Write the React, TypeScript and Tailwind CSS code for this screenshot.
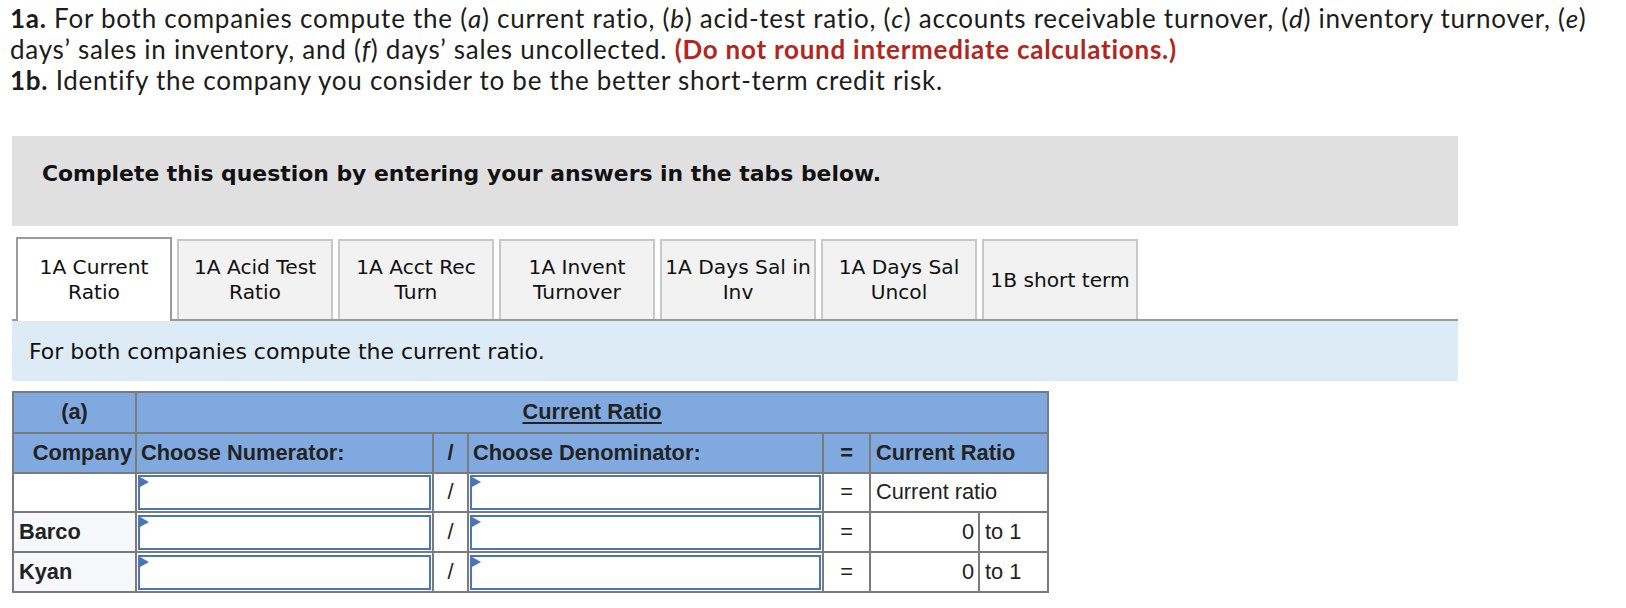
import React from "react";

const Inp = () => (
  <div className="relative h-[35px] border-2 border-[#4a76b8] bg-white">
    <div className="absolute left-0 top-0 w-0 h-0 border-t-[5px] border-b-[5px] border-l-[9px] border-t-transparent border-b-transparent border-l-[#4a76b8]" />
  </div>
);

const tabs = [
  ["1A Current", "Ratio"],
  ["1A Acid Test", "Ratio"],
  ["1A Acct Rec", "Turn"],
  ["1A Invent", "Turnover"],
  ["1A Days Sal in", "Inv"],
  ["1A Days Sal", "Uncol"],
  ["1B short term"],
];

export default function App() {
  const cell = "border-2 border-[#7b7b7b]";
  return (
    <div className="w-[1626px] h-[608px] bg-white overflow-hidden text-[#111]">
      <div
        className="pl-[10px] pt-[3px] text-[26px] leading-[31px] tracking-[0.75px] text-[#1c1c1c]"
        style={{ fontFamily: "Lato, 'Open Sans', sans-serif" }}
      >
        <b>1a.</b> For both companies compute the (<i>a</i>) current ratio, (<i>b</i>) acid-test ratio, (<i>c</i>) accounts receivable turnover, (<i>d</i>) inventory turnover, (<i>e</i>)
        <br />
        days’ sales in inventory, and (<i>f</i>) days’ sales uncollected.{" "}
        <b className="text-[#b3261e]">(Do not round intermediate calculations.)</b>
        <br />
        <b>1b.</b> Identify the company you consider to be the better short-term credit risk.
      </div>

      <div style={{ fontFamily: "'DejaVu Sans', Verdana, sans-serif" }}>
        <div className="ml-[12px] mt-[40px] w-[1446px] h-[90px] bg-[#e0e0e0] pl-[30px] pt-[24px]">
          <div className="text-[21.9px] leading-[28px] font-bold text-[#111]">
            Complete this question by entering your answers in the tabs below.
          </div>
        </div>

        <div className="ml-[12px] mt-[13px] w-[1446px] h-[82px] flex items-end gap-[5px] pl-[4px] border-b-2 border-[#9a9a9a]">
          {tabs.map((t, i) => (
            <div
              key={i}
              className={
                i === 0
                  ? "w-[156px] h-[84px] -mb-[2px] bg-white border-2 border-b-0 border-[#9a9a9a] flex flex-col items-center justify-center text-[20.2px] leading-[25px] text-[#111]"
                  : "w-[156px] h-[80px] bg-[#f2f2f2] border-2 border-b-0 border-[#c8c8c8] flex flex-col items-center justify-center text-[20.2px] leading-[25px] text-[#111]"
              }
            >
              {t.map((l, j) => (
                <div key={j} className="whitespace-nowrap">{l}</div>
              ))}
            </div>
          ))}
        </div>

        <div className="ml-[12px] w-[1446px] h-[60px] bg-[#ddebf7] pl-[17px] flex items-center">
          <div className="text-[22px] text-[#111]">For both companies compute the current ratio.</div>
        </div>
      </div>

      <div className="ml-[12px] mt-[10px]" style={{ fontFamily: "'Liberation Sans', Arial, sans-serif" }}>
        <table className="table-fixed border-collapse w-[1035px] text-[21.8px] text-[#222]">
          <colgroup>
            <col style={{ width: 123 }} />
            <col style={{ width: 297 }} />
            <col style={{ width: 35 }} />
            <col style={{ width: 355 }} />
            <col style={{ width: 47 }} />
            <col style={{ width: 109 }} />
            <col style={{ width: 69 }} />
          </colgroup>
          <tbody>
            <tr className="h-[41px] bg-[#80aadf] font-bold">
              <td className={`${cell} text-center`}>(a)</td>
              <td className={`${cell} text-center`} colSpan={6}>
                <span className="underline underline-offset-[3px]">Current Ratio</span>
              </td>
            </tr>
            <tr className="h-[40px] bg-[#80aadf] font-bold">
              <td className={`${cell} text-right pr-[3px]`}>Company</td>
              <td className={`${cell} pl-[4px] whitespace-nowrap`}>Choose Numerator:</td>
              <td className={`${cell} text-center`}>/</td>
              <td className={`${cell} pl-[4px] whitespace-nowrap`}>Choose Denominator:</td>
              <td className={`${cell} text-center`}>=</td>
              <td className={`${cell} pl-[5px] whitespace-nowrap`} colSpan={2}>Current Ratio</td>
            </tr>
            <tr className="h-[39px] bg-white">
              <td className={cell}></td>
              <td className={`${cell} p-px`}><Inp /></td>
              <td className={`${cell} text-center`}>/</td>
              <td className={`${cell} p-px`}><Inp /></td>
              <td className={`${cell} text-center`}>=</td>
              <td className={`${cell} pl-[5px] whitespace-nowrap`} colSpan={2}>Current ratio</td>
            </tr>
            {["Barco", "Kyan"].map((n) => (
              <tr key={n} className="h-[40px] bg-white">
                <td className={`${cell} bg-[#f7f8fb] font-bold pl-[5px]`}>{n}</td>
                <td className={`${cell} p-px`}><Inp /></td>
                <td className={`${cell} text-center`}>/</td>
                <td className={`${cell} p-px`}><Inp /></td>
                <td className={`${cell} text-center`}>=</td>
                <td className={`${cell} text-right pr-[4px]`}>0</td>
                <td className={`${cell} pl-[5px] whitespace-nowrap`}>to 1</td>
              </tr>
            ))}
          </tbody>
        </table>
      </div>
    </div>
  );
}
